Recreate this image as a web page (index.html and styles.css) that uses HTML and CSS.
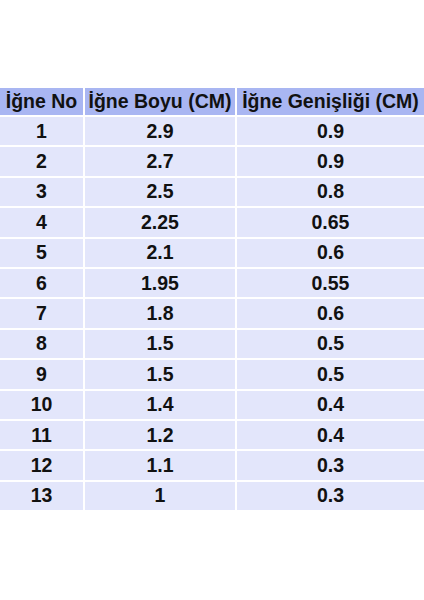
FILE: index.html
```html
<!DOCTYPE html>
<html lang="tr">
<head>
<meta charset="utf-8">
<link rel="stylesheet" href="styles.css">
</head>
<body>
<div class="table">
  <div class="cell head">İğne No</div><div class="cell head">İğne Boyu (CM)</div><div class="cell head">İğne Genişliği (CM)</div>
  <div class="cell">1</div><div class="cell">2.9</div><div class="cell">0.9</div>
  <div class="cell">2</div><div class="cell">2.7</div><div class="cell">0.9</div>
  <div class="cell">3</div><div class="cell">2.5</div><div class="cell">0.8</div>
  <div class="cell">4</div><div class="cell">2.25</div><div class="cell">0.65</div>
  <div class="cell">5</div><div class="cell">2.1</div><div class="cell">0.6</div>
  <div class="cell">6</div><div class="cell">1.95</div><div class="cell">0.55</div>
  <div class="cell">7</div><div class="cell">1.8</div><div class="cell">0.6</div>
  <div class="cell">8</div><div class="cell">1.5</div><div class="cell">0.5</div>
  <div class="cell">9</div><div class="cell">1.5</div><div class="cell">0.5</div>
  <div class="cell">10</div><div class="cell">1.4</div><div class="cell">0.4</div>
  <div class="cell">11</div><div class="cell">1.2</div><div class="cell">0.4</div>
  <div class="cell">12</div><div class="cell">1.1</div><div class="cell">0.3</div>
  <div class="cell">13</div><div class="cell">1</div><div class="cell">0.3</div>
</div>
</body>
</html>
```
FILE: styles.css
```css
html, body {
  margin: 0;
  padding: 0;
  background: #ffffff;
}
body {
  font-family: "Liberation Sans", Arial, sans-serif;
  padding-top: 88px;
}
.table {
  display: grid;
  grid-template-columns: 83px 150px 1fr;
  grid-template-rows: 27px repeat(13, 28.4px);
  column-gap: 2px;
  row-gap: 2px;
  width: 424px;
}
.cell {
  background: #e3e6fb;
  color: #111111;
  font-weight: bold;
  font-size: 19.5px;
  display: flex;
  align-items: center;
  justify-content: center;
  white-space: nowrap;
}
.cell.head {
  background: #a9b6f2;
}
```
